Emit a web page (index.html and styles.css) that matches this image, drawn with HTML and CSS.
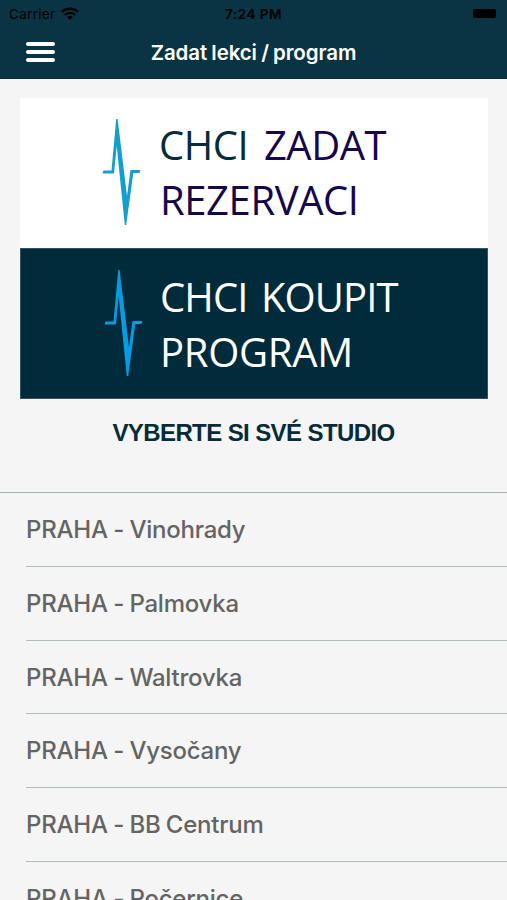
FILE: index.html
```html
<!DOCTYPE html>
<html lang="cs">
<head>
    <meta charset="UTF-8">
    <title>Zadat lekci / program</title>
    <link rel="stylesheet" href="styles.css">
</head>
<body>
<header class="header">
    <div class="status-bar">
        <div class="carrier">
            <span>Carrier</span>
            <svg class="wifi" viewBox="0 0 18 13" fill="none" stroke="#000" stroke-width="2.3">
                <path d="M1 4.9C5.5.5 12.5.5 17 4.9"/>
                <path d="M3.9 8C6.8 5.2 11.2 5.2 14.1 8"/>
                <path d="M9 13L6.2 10.1C7.8 8.7 10.2 8.7 11.8 10.1Z" fill="#000" stroke="none"/>
            </svg>
        </div>
        <span class="time">7:24 PM</span>
        <span class="battery"></span>
    </div>
    <div class="nav-bar">
        <button class="menu-btn" aria-label="Menu">
            <span></span>
            <span></span>
            <span></span>
        </button>
        <h1>Zadat lekci / program</h1>
    </div>
</header>

<main>
    <div class="banners">
        <a class="banner banner-light" href="#">
            <svg class="pulse" viewBox="0 0 39 107" fill="currentColor">
                <path d="M1.5 51.5H9.5L14.2 0H15.6L25 77L28.5 51H38.5L37.5 54H31.3L24.2 106H22.8L14.7 27L12 54.5H.5Z"/>
            </svg>
            <span class="banner-text">
                <span class="line line-zadat"><span class="dark">CHCI</span> ZADAT</span>
                <span class="line line-rezervaci">REZERVACI</span>
            </span>
        </a>
        <a class="banner banner-dark" href="#">
            <svg class="pulse" viewBox="0 0 39 107" fill="currentColor">
                <path d="M1.5 51.5H9.5L14.2 0H15.6L25 77L28.5 51H38.5L37.5 54H31.3L24.2 106H22.8L14.7 27L12 54.5H.5Z"/>
            </svg>
            <span class="banner-text">
                <span class="line line-koupit">CHCI KOUPIT</span>
                <span class="line line-program">PROGRAM</span>
            </span>
        </a>
    </div>

    <h2>VYBERTE SI SVÉ STUDIO</h2>

    <ul class="studios">
        <li>PRAHA - Vinohrady</li>
        <li>PRAHA - Palmovka</li>
        <li>PRAHA - Waltrovka</li>
        <li>PRAHA - Vysočany</li>
        <li>PRAHA - BB Centrum</li>
        <li>PRAHA - Počernice</li>
    </ul>
</main>
</body>
</html>
```
FILE: styles.css
```css
* {
    box-sizing: border-box;
}

body {
    font-family: Inter, "Liberation Sans", sans-serif;
    background-color: #f5f5f5;
    margin: 0;
    height: 900px;
    overflow: hidden;
}

.header {
    height: 79px;
    background-color: #0a3443;
    border-bottom: 1px solid #062b39;
}

/* Status bar */
.status-bar {
    display: grid;
    grid-template-columns: 1fr auto 1fr;
    align-items: center;
    height: 27px;
    padding: 0 11px 0 9px;
    font-size: 13.5px;
    color: #000000;
}

.carrier {
    display: flex;
    align-items: center;
    gap: 6px;
    letter-spacing: 0.3px;
}

.wifi {
    width: 18px;
    height: 13px;
    margin-top: -1px;
}

.time {
    margin-left: 2px;
    font-weight: 600;
    letter-spacing: 0.5px;
}

.battery {
    justify-self: end;
    width: 23px;
    height: 9px;
    border-radius: 2px;
    background-color: #000000;
}

/* Navigation bar */
.nav-bar {
    display: grid;
    grid-template-columns: 56px 1fr 56px;
    align-items: center;
    height: 50px;
}

.menu-btn {
    display: flex;
    flex-direction: column;
    gap: 4px;
    width: 29px;
    margin-left: 26px;
    padding: 0;
    border: none;
    background: none;
    cursor: pointer;
}

.menu-btn span {
    width: 29px;
    height: 4px;
    border-radius: 2px;
    background-color: #ffffff;
}

h1 {
    margin: 0;
    text-align: center;
    font-size: 20.5px;
    font-weight: 600;
    letter-spacing: -0.1px;
    word-spacing: -0.8px;
    color: #ffffff;
}

/* Banners */
.banners {
    padding: 19px 19px 0 20px;
}

.banner {
    display: flex;
    height: 150px;
    padding-top: 19px;
    font-family: "Open Sans", sans-serif;
    font-size: 40px;
    line-height: 55px;
    text-decoration: none;
}

.banner-light {
    padding-left: 82px;
    background-color: #ffffff;
    color: #15074a;
}

.banner-dark {
    height: 151px;
    padding-left: 83px;
    padding-top: 20px;
    background-color: #002b3a;
    border: 1px solid #34535f;
    color: #ffffff;
}

.pulse {
    width: 39px;
    height: 107px;
    margin-top: 2px;
    color: #129fce;
}

.banner-dark .pulse {
    margin-top: 1px;
    color: #079be3;
}

.banner-text {
    padding-left: 17px;
}

.line {
    display: block;
    white-space: nowrap;
}

.line-zadat {
    letter-spacing: -0.5px;
    word-spacing: 6px;
    padding-left: 1px;
}

.line-rezervaci {
    letter-spacing: -0.4px;
    padding-left: 2px;
}

.line-koupit {
    letter-spacing: -0.9px;
    word-spacing: 4px;
}

.line-program {
    letter-spacing: -0.3px;
}

.dark {
    color: #062b39;
}

/* Studio list */
h2 {
    margin: 0;
    padding-top: 18px;
    height: 93px;
    text-align: center;
    font-family: "Liberation Sans", sans-serif;
    font-size: 24px;
    line-height: 32px;
    font-weight: bold;
    letter-spacing: -0.6px;
    color: #062b39;
}

.studios {
    list-style: none;
    margin: 0;
    padding: 0 0 0 26px;
    border-top: 1px solid #a9b2b3;
}

.studios li {
    height: 73.75px;
    border-bottom: 1px solid #b2bcbc;
    font-size: 24px;
    line-height: 74px;
    font-weight: 500;
    letter-spacing: -0.22px;
    word-spacing: -0.8px;
    color: #646464;
    white-space: nowrap;
}
```
